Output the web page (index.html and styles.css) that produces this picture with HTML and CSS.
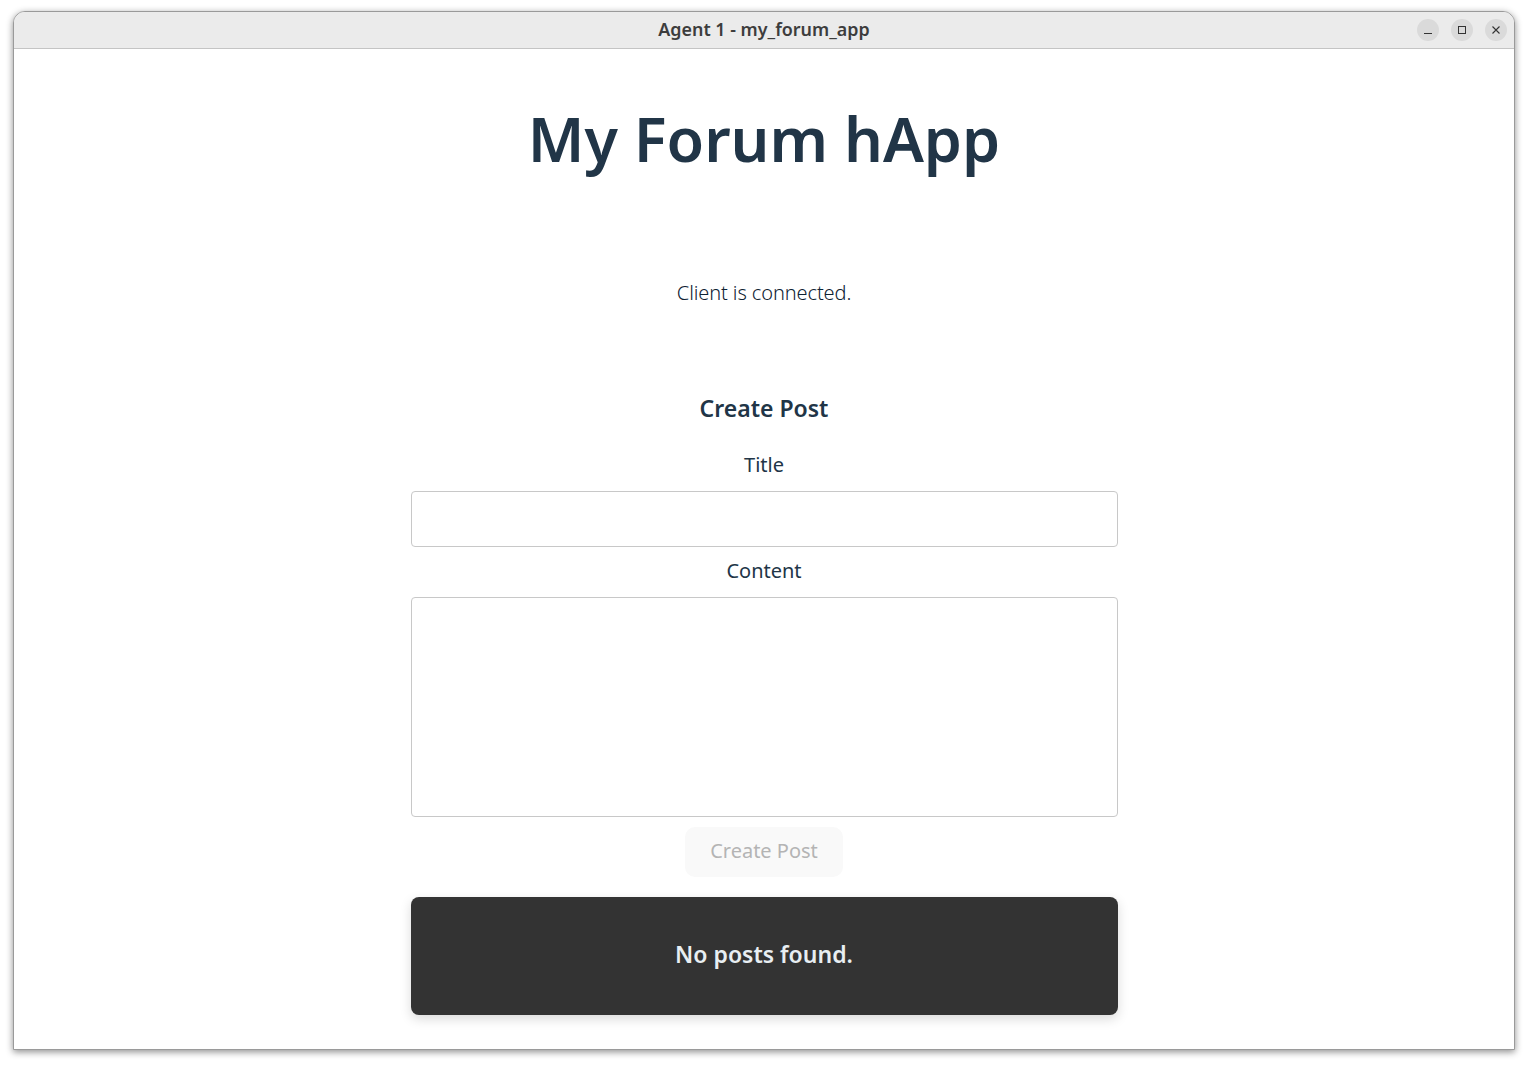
FILE: index.html
```html
<!DOCTYPE html>
<html lang="en">
<head>
  <meta charset="UTF-8">
  <meta name="viewport" content="width=device-width, initial-scale=1.0">
  <title>Agent 1 - my_forum_app</title>
  <link rel="stylesheet" href="styles.css">
</head>
<body>
  <div class="window">
    <div class="titlebar">
      <span class="window-title">Agent 1 - my_forum_app</span>
      <div class="window-controls">
        <button class="window-btn" aria-label="Minimize">
          <svg width="10" height="10" viewBox="0 0 10 10"><path d="M1 8.5h8" stroke="#333" stroke-width="1" fill="none"/></svg>
        </button>
        <button class="window-btn" aria-label="Maximize">
          <svg width="10" height="10" viewBox="0 0 10 10"><rect x="1.5" y="1.5" width="7" height="7" stroke="#333" stroke-width="1" fill="none"/></svg>
        </button>
        <button class="window-btn" aria-label="Close">
          <svg width="10" height="10" viewBox="0 0 10 10"><path d="M1.5 1.5l7 7M8.5 1.5l-7 7" stroke="#333" stroke-width="1.1" fill="none"/></svg>
        </button>
      </div>
    </div>
    <main class="app">
      <h1>My Forum hApp</h1>
      <p class="status">Client is connected.</p>
      <form class="post-form">
        <h3>Create Post</h3>
        <label for="title">Title</label>
        <input id="title" type="text">
        <label for="content">Content</label>
        <textarea id="content"></textarea>
        <button class="submit" type="button" disabled>Create Post</button>
      </form>
      <div class="posts-empty">No posts found.</div>
    </main>
  </div>
</body>
</html>
```

FILE: styles.css
```css
* {
  box-sizing: border-box;
}

body {
  margin: 0;
  padding: 11px 13px 16px;
  background: #fff;
  font-family: "Noto Sans", sans-serif;
  color: #213547;
}

.window {
  height: 1039px;
  border: 1px solid #9a9a9a;
  border-radius: 12px 12px 0 0;
  background: #fff;
  box-shadow: 0 2px 7px rgba(0, 0, 0, 0.45);
  overflow: hidden;
}

.titlebar {
  position: relative;
  height: 37px;
  padding-bottom: 2px;
  display: flex;
  align-items: center;
  justify-content: center;
  background: #ebebeb;
  border-bottom: 1px solid #c4c4c4;
}

.window-title {
  font-size: 17.9px;
  font-weight: 600;
  color: #3d3d3d;
}

.window-controls {
  position: absolute;
  right: 7px;
  top: 7px;
  display: flex;
  gap: 12px;
}

.window-btn {
  width: 22px;
  height: 22px;
  padding: 0;
  border: 0;
  border-radius: 50%;
  background: #dadada;
  display: flex;
  align-items: center;
  justify-content: center;
}

.app {
  width: 707px;
  margin: 0 auto;
  text-align: center;
}

h1 {
  margin: 0;
  padding-top: 49px;
  font-size: 61px;
  line-height: 82px;
  font-weight: 600;
}

.status {
  margin: 99px 0 0;
  font-size: 20px;
  line-height: 28px;
  font-weight: 300;
  letter-spacing: -0.1px;
  color: #0e2233;
}

.post-form {
  display: flex;
  flex-direction: column;
  align-items: center;
  margin-top: 85px;
}

h3 {
  margin: 0;
  font-size: 23px;
  line-height: 32px;
  font-weight: 600;
}

label {
  margin-top: 29px;
  font-size: 20px;
  line-height: 24px;
}

input,
textarea {
  display: block;
  width: 100%;
  margin: 14px 0 0;
  border: 1px solid #c8c8c8;
  border-radius: 4px;
  background: #fff;
  resize: none;
}

input {
  height: 56px;
}

textarea {
  height: 220px;
}

label[for="content"] {
  margin-top: 12px;
}

.submit {
  margin-top: 10px;
  width: 158px;
  height: 50px;
  padding: 0 0 4px;
  border: 0;
  border-radius: 10px;
  background: #f9f9f9;
  color: #b4b4b4;
  font-family: inherit;
  font-size: 20px;
}

.posts-empty {
  margin-top: 20px;
  height: 118px;
  padding-bottom: 5px;
  display: flex;
  align-items: center;
  justify-content: center;
  border-radius: 8px;
  background: #333;
  color: #e8eef2;
  font-size: 23px;
  font-weight: 600;
  box-shadow: 0 4px 12px rgba(0, 0, 0, 0.15);
}
```
